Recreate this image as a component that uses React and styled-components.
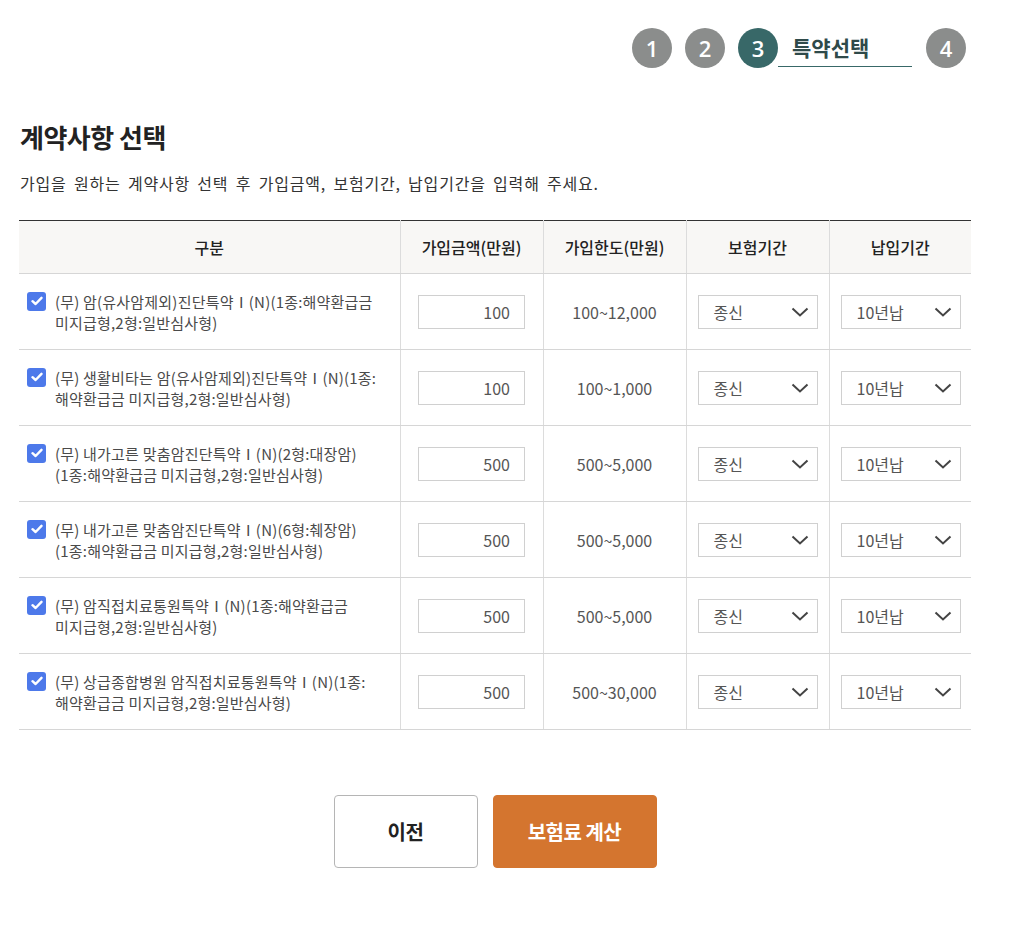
import React from "react";
import styled, { createGlobalStyle } from "styled-components";

const GlobalStyle = createGlobalStyle`
  body {
    margin: 0;
    background: #fff;
    font-family: "Noto Sans CJK KR", "Noto Sans", sans-serif;
    color: #333;
  }
  * { box-sizing: border-box; }
`;

// each name is split in the two lines the original table shows
const rows = [
  { name: ["(무) 암(유사암제외)진단특약Ⅰ(N)(1종:해약환급금", "미지급형,2형:일반심사형)"], amount: "100", limit: "100~12,000" },
  { name: ["(무) 생활비타는 암(유사암제외)진단특약Ⅰ(N)(1종:", "해약환급금 미지급형,2형:일반심사형)"], amount: "100", limit: "100~1,000" },
  { name: ["(무) 내가고른 맞춤암진단특약Ⅰ(N)(2형:대장암)", "(1종:해약환급금 미지급형,2형:일반심사형)"], amount: "500", limit: "500~5,000" },
  { name: ["(무) 내가고른 맞춤암진단특약Ⅰ(N)(6형:췌장암)", "(1종:해약환급금 미지급형,2형:일반심사형)"], amount: "500", limit: "500~5,000" },
  { name: ["(무) 암직접치료통원특약Ⅰ(N)(1종:해약환급금", "미지급형,2형:일반심사형)"], amount: "500", limit: "500~5,000" },
  { name: ["(무) 상급종합병원 암직접치료통원특약Ⅰ(N)(1종:", "해약환급금 미지급형,2형:일반심사형)"], amount: "500", limit: "500~30,000" },
];

const Chevron = () => (
  <svg width="18" height="12" viewBox="0 0 18 12" fill="none">
    <path d="M1.5 2.5 L9 9.5 L16.5 2.5" stroke="#444" strokeWidth="2" />
  </svg>
);

const Check = () => (
  <svg width="12" height="10" viewBox="0 0 12 10" fill="none">
    <path d="M1.5 5.2 L4.6 8 L10.5 1.8" stroke="#fff" strokeWidth="2.4" strokeLinecap="round" strokeLinejoin="round" />
  </svg>
);

const App = () => {
  return (
    <>
      <GlobalStyle />
      <Page>
        <Stepper>
          <StepCircle>1</StepCircle>
          <StepCircle>2</StepCircle>
          <ActiveStep>
            <StepCircle $active>3</StepCircle>
            <StepLabel>특약선택</StepLabel>
          </ActiveStep>
          <StepCircle>4</StepCircle>
        </Stepper>

        <Title>계약사항 선택</Title>
        <Desc>가입을 원하는 계약사항 선택 후 가입금액, 보험기간, 납입기간을 입력해 주세요.</Desc>

        <Table>
          <colgroup>
            <col style={{ width: 381 }} />
            <col style={{ width: 143 }} />
            <col style={{ width: 143 }} />
            <col style={{ width: 143 }} />
            <col style={{ width: 142 }} />
          </colgroup>
          <thead>
            <tr>
              <Th>구분</Th>
              <Th>가입금액(만원)</Th>
              <Th>가입한도(만원)</Th>
              <Th>보험기간</Th>
              <Th>납입기간</Th>
            </tr>
          </thead>
          <tbody>
            {rows.map((r, i) => (
              <tr key={i}>
                <NameCell>
                  <CheckLabel>
                    <CheckBox><Check /></CheckBox>
                    <span>
                      {r.name[0]}
                      <br />
                      {r.name[1]}
                    </span>
                  </CheckLabel>
                </NameCell>
                <Td>
                  <AmountBox>{r.amount}</AmountBox>
                </Td>
                <Td>{r.limit}</Td>
                <Td>
                  <SelectBox>
                    <span>종신</span>
                    <Chevron />
                  </SelectBox>
                </Td>
                <Td>
                  <SelectBox>
                    <span>10년납</span>
                    <Chevron />
                  </SelectBox>
                </Td>
              </tr>
            ))}
          </tbody>
        </Table>

        <Buttons>
          <Button>이전</Button>
          <Button $primary>보험료 계산</Button>
        </Buttons>
      </Page>
    </>
  );
};

const Page = styled.div`
  width: 952px;
  margin-left: 19px;
  padding-top: 28px;
  padding-bottom: 60px;
`;

const Stepper = styled.div`
  display: flex;
  justify-content: flex-end;
  align-items: center;
  gap: 13px;
  padding-right: 5px;
`;

const StepCircle = styled.div`
  width: 40px;
  height: 40px;
  border-radius: 50%;
  background: ${(p) => (p.$active ? "#386868" : "#8b8d8c")};
  color: #fff;
  font-family: "Open Sans", "Noto Sans", sans-serif;
  font-size: 22px;
  font-weight: 600;
  display: flex;
  align-items: center;
  justify-content: center;
  position: relative;
  z-index: 1;
`;

const ActiveStep = styled.div`
  display: flex;
  align-items: center;
  margin-right: 1px;
`;

const StepLabel = styled.div`
  width: 134px;
  height: 40px;
  padding-left: 14px;
  border-bottom: 1px solid #386868;
  font-size: 21px;
  font-weight: 700;
  color: #2f4a4a;
  line-height: 40px;
  margin-top: -2px;
`;

const Title = styled.h2`
  margin: 51px 0 0 1px;
  font-size: 26px;
  font-weight: 700;
  color: #222;
  letter-spacing: -0.5px;
  line-height: 36px;
`;

const Desc = styled.p`
  margin: 17px 0 0 1px;
  font-size: 16px;
  color: #333;
  line-height: 22px;
  letter-spacing: 0.8px;
  word-spacing: 3px;
`;

const Table = styled.table`
  margin-top: 26px;
  width: 952px;
  border-collapse: collapse;
  table-layout: fixed;
  border-top: 1px solid #333;
`;

const Th = styled.th`
  height: 53px;
  background: #f8f7f5;
  font-size: 16px;
  font-weight: 500;
  color: #222;
  border-bottom: 1px solid #d6d6d6;
  border-left: 1px solid #dcdcdc;
  &:first-child { border-left: none; }
`;

const Td = styled.td`
  height: 76px;
  text-align: center;
  vertical-align: middle;
  font-size: 16px;
  color: #555;
  border-bottom: 1px solid #d6d6d6;
  border-left: 1px solid #dcdcdc;
  padding: 0 11px;
`;

const NameCell = styled(Td)`
  text-align: left;
  border-left: none;
  padding: 0 6px 0 8px;
`;

const CheckLabel = styled.label`
  display: flex;
  align-items: flex-start;
  gap: 9px;
  font-size: 15px;
  line-height: 21px;
  color: #4a4a4a;
  letter-spacing: 0.2px;
  white-space: nowrap;
`;

const CheckBox = styled.span`
  flex: none;
  width: 19px;
  height: 19px;
  margin-top: 1px;
  border-radius: 3px;
  background: #4d79ea;
  display: flex;
  align-items: center;
  justify-content: center;
`;

const AmountBox = styled.div`
  width: 107px;
  height: 34px;
  margin: 0 auto;
  border: 1px solid #d0d0d0;
  text-align: right;
  padding-right: 14px;
  line-height: 32px;
  font-size: 16px;
  color: #555;
`;

const SelectBox = styled.div`
  width: 120px;
  height: 34px;
  margin: 0 auto;
  border: 1px solid #d0d0d0;
  display: flex;
  align-items: center;
  justify-content: space-between;
  padding: 0 8px 0 15px;
  font-size: 16px;
  color: #555;
`;

const Buttons = styled.div`
  display: flex;
  justify-content: center;
  gap: 15px;
  margin-top: 65px;
`;

const Button = styled.button`
  width: ${(p) => (p.$primary ? "164px" : "144px")};
  height: 73px;
  border-radius: 4px;
  border: 1px solid ${(p) => (p.$primary ? "#d4752f" : "#b5b5b5")};
  background: ${(p) => (p.$primary ? "#d4752f" : "#fff")};
  color: ${(p) => (p.$primary ? "#fff" : "#222")};
  font-family: "Noto Sans CJK KR", "Noto Sans", sans-serif;
  font-size: 20px;
  font-weight: 700;
  letter-spacing: -0.5px;
  cursor: pointer;
`;

export default App;
